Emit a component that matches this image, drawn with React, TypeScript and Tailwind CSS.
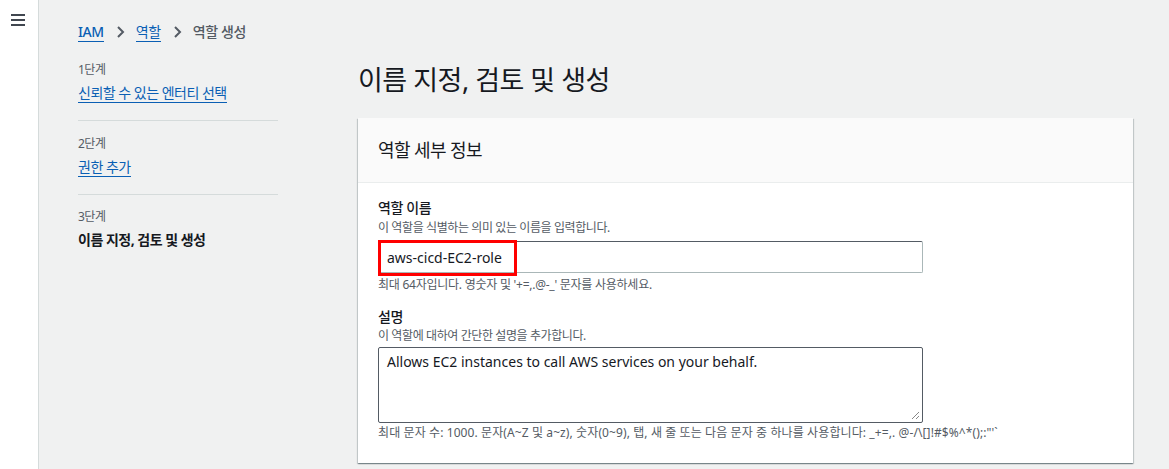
import * as React from "react"

const font = "font-['Noto_Sans','Noto_Sans_CJK_KR',sans-serif]"

function Chevron() {
  return (
    <svg width="16" height="16" viewBox="0 0 16 16" className="mx-[8px] shrink-0">
      <path d="M6 3l5 5-5 5" fill="none" stroke="#545b64" strokeWidth="2" />
    </svg>
  )
}

function Step({ label, children, last }: { label: string; children: React.ReactNode; last?: boolean }) {
  return (
    <div className={last ? "pt-[14px]" : "border-b border-[#d5dbdb] pt-[15px] pb-[17px] first:pt-0"}>
      <div className="text-[12px] leading-[16px] text-[#545b64]">{label}</div>
      <div className="mt-[5px] text-[14px] leading-[20px]">{children}</div>
    </div>
  )
}

export default function App() {
  return (
    <div className={`flex h-[469px] w-[1169px] overflow-hidden bg-[#f0f1f1] ${font} text-[#16191f]`}>
      <nav className="w-[39px] shrink-0 border-r border-[#d5dbdb] bg-white pt-[13px] pl-[11px]">
        <svg width="15" height="13" viewBox="0 0 15 13">
          <rect x="0" y="1" width="14" height="2" fill="#414750" />
          <rect x="0" y="6" width="14" height="2" fill="#414750" />
          <rect x="0" y="11" width="14" height="2" fill="#414750" />
        </svg>
      </nav>

      <main className="flex-1 pt-[21px] pl-[39px] pr-[36px]">
        <div className="flex h-[22px] items-center text-[14px] leading-[20px] tracking-[-0.4px]">
          <a className="border-b border-[#0a5fb4] font-medium leading-[18px] text-[#0a5fb4]">IAM</a>
          <Chevron />
          <a className="border-b border-[#0a5fb4] leading-[18px] text-[#0a5fb4]">역할</a>
          <Chevron />
          <span className="font-medium text-[#545b64]">역할 생성</span>
        </div>

        <div className="mt-[19px] flex gap-[80px]">
          <div className="w-[200px] shrink-0 tracking-[-0.5px]">
            <Step label="1단계">
              <a className="border-b border-[#0a5fb4] text-[#0a5fb4]">신뢰할 수 있는 엔터티 선택</a>
            </Step>
            <Step label="2단계">
              <a className="border-b border-[#0a5fb4] text-[#0a5fb4]">권한 추가</a>
            </Step>
            <Step label="3단계" last>
              <span className="font-bold">이름 지정, 검토 및 생성</span>
            </Step>
          </div>

          <div className="flex-1">
            <h1 className="h-[36px] text-[27px] leading-[36px] font-normal tracking-[-0.5px] text-[#16191f]">
              이름 지정, 검토 및 생성
            </h1>

            <section className="mt-[20px] bg-white shadow-[0_1px_1px_0_rgba(0,28,36,0.3),1px_1px_1px_0_rgba(0,28,36,0.15),-1px_1px_1px_0_rgba(0,28,36,0.15)]">
              <header className="flex h-[65px] items-center border-b border-[#eaeded] bg-[#fafafa] px-[20px]">
                <h2 className="text-[18px] leading-[22px] tracking-[-0.6px]">역할 세부 정보</h2>
              </header>

              <div className="px-[20px] pt-[15px] pb-[22px]">
                <div className="text-[14px] leading-[20px] font-medium tracking-[-0.4px]">역할 이름</div>
                <div className="mt-[2px] text-[12px] leading-[16px] tracking-[-0.4px] text-[#545b64]">
                  이 역할을 식별하는 의미 있는 이름을 입력합니다.
                </div>
                <div className="relative mt-[5px] w-[545px]">
                  <div className="flex h-[32px] items-center rounded-[2px] border border-[#aab7b8] border-t-[#545b64] px-[8px] text-[14px]">
                    aws-cicd-EC2-role
                  </div>
                  <span className="absolute top-[-1px] left-0 h-[36px] w-[139px] border-[3px] border-[#ff0000]" />
                </div>
                <div className="mt-[4px] text-[12px] leading-[16px] tracking-[-0.25px] text-[#545b64]">
                  최대 64자입니다. 영숫자 및 '+=,.@-_' 문자를 사용하세요.
                </div>

                <div className="mt-[14px] text-[14px] leading-[20px] font-medium tracking-[-0.4px]">설명</div>
                <div className="mt-[1px] text-[12px] leading-[16px] tracking-[-0.4px] text-[#545b64]">
                  이 역할에 대하여 간단한 설명을 추가합니다.
                </div>
                <div className="relative mt-[3px] h-[76px] w-[545px] rounded-[2px] border border-[#545b64] px-[8px] pt-[4px] text-[14px] leading-[20px]">
                  Allows EC2 instances to call AWS services on your behalf.
                  <svg width="9" height="9" viewBox="0 0 9 9" className="absolute right-[2px] bottom-[2px]">
                    <path d="M8 1L1 8M8 5L5 8" stroke="#888" strokeWidth="1" />
                  </svg>
                </div>
                <div className="mt-[2px] text-[12px] leading-[16px] tracking-[0.1px] text-[#545b64]">
                  최대 문자 수: 1000. 문자(A~Z 및 a~z), 숫자(0~9), 탭, 새 줄 또는 다음 문자 중 하나를 사용합니다: _+=,. @-/\[{}]!#$%^*();:"'`
                </div>
              </div>
            </section>
          </div>
        </div>
      </main>
    </div>
  )
}
